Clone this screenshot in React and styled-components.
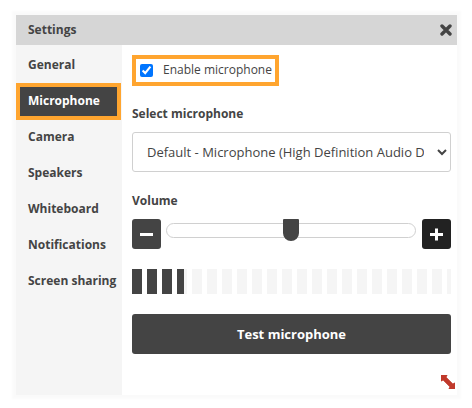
import React, { useState } from "react";
import styled, { createGlobalStyle } from "styled-components";

const tabs = [
  "General",
  "Microphone",
  "Camera",
  "Speakers",
  "Whiteboard",
  "Notifications",
  "Screen sharing",
];

function App() {
  const [tab, setTab] = useState("Microphone");
  const [enabled, setEnabled] = useState(true);
  const [volume, setVolume] = useState(50);
  const level = 16.3;

  return (
    <>
      <GlobalStyle />
      <Dialog role="dialog" aria-labelledby="settings-title">
        <Header>
          <Title id="settings-title">Settings</Title>
          <CloseButton aria-label="Close">
            <svg width="12" height="12" viewBox="0 0 12 12">
              <path
                d="M2 2L10 10M10 2L2 10"
                stroke="#444"
                strokeWidth="3.4"
                strokeLinecap="round"
              />
            </svg>
          </CloseButton>
        </Header>
        <Body>
          <Sidebar>
            {tabs.map((name) => (
              <Tab key={name} $active={name === tab} onClick={() => setTab(name)}>
                {name}
              </Tab>
            ))}
          </Sidebar>
          <Content>
            <CheckLabel>
              <Checkbox
                type="checkbox"
                checked={enabled}
                onChange={(e) => setEnabled(e.target.checked)}
              />
              <CheckText>Enable microphone</CheckText>
            </CheckLabel>

            <FieldLabel htmlFor="microphone">Select microphone</FieldLabel>
            <Select id="microphone">
              <option>Default - Microphone (High Definition Audio Device)</option>
            </Select>

            <FieldLabel htmlFor="volume">Volume</FieldLabel>
            <VolumeRow>
              <StepButton
                aria-label="Decrease volume"
                onClick={() => setVolume(Math.max(0, volume - 10))}
              >
                <svg width="13" height="13" viewBox="0 0 13 13">
                  <path d="M0 6.5H13" stroke="#fff" strokeWidth="3" />
                </svg>
              </StepButton>
              <Slider
                id="volume"
                type="range"
                min="0"
                max="100"
                value={volume}
                onChange={(e) => setVolume(Number(e.target.value))}
              />
              <StepButton
                $dark
                aria-label="Increase volume"
                onClick={() => setVolume(Math.min(100, volume + 10))}
              >
                <svg width="13" height="13" viewBox="0 0 13 13">
                  <path d="M0 6.5H13M6.5 0.5V12.5" stroke="#fff" strokeWidth="3" />
                </svg>
              </StepButton>
            </VolumeRow>

            <Meter role="meter" aria-label="Input level" aria-valuenow={level}>
              <MeterFill style={{ width: `${level}%` }} />
            </Meter>

            <TestButton>Test microphone</TestButton>
          </Content>
        </Body>
        <ResizeHandle width="14" height="14" viewBox="0 0 14 14">
          <path
            d="M0 0H6V1L5 2L12 9L13 8H14V14H8V13L9 12L2 5L1 6H0Z"
            fill="#c0392b"
            stroke="#c0392b"
            strokeWidth="0.6"
          />
        </ResizeHandle>
      </Dialog>
    </>
  );
}

export default App;

const GlobalStyle = createGlobalStyle`
  * {
    box-sizing: border-box;
  }

  body {
    margin: 0;
    background: #fff;
    color: #444;
    font-family: "Open Sans", sans-serif;
    font-size: 12px;
  }

  button, select, input {
    font-family: inherit;
    color: inherit;
    margin: 0;
  }
`;

const Dialog = styled.div`
  position: relative;
  display: flex;
  flex-direction: column;
  margin: 15px 15px 13px 16px;
  min-height: calc(100vh - 28px);
  background: #fff;
  box-shadow: 0 0 2px 4px rgba(0, 0, 0, 0.02);
`;

const Header = styled.div`
  display: flex;
  align-items: center;
  justify-content: space-between;
  height: 30px;
  padding: 0 5px 0 12px;
  background: #d6d6d6;
`;

const Title = styled.h1`
  margin: 0;
  padding-bottom: 2px;
  font-size: 12px;
  font-weight: 700;
`;

const CloseButton = styled.button`
  display: flex;
  padding: 0;
  border: 0;
  background: none;
`;

const Body = styled.div`
  display: flex;
  flex: 1;
`;

const Sidebar = styled.nav`
  display: flex;
  flex-direction: column;
  flex: 0 0 106px;
  padding: 2px 1px 0 0;
  background: #f5f5f5;
`;

const Tab = styled.button`
  height: ${(p) => (p.$active ? "37px" : "36px")};
  margin-bottom: ${(p) => (p.$active ? "-1px" : "0")};
  padding: 0 0 2px ${(p) => (p.$active ? "8px" : "12px")};
  border: ${(p) => (p.$active ? "4px solid #ffa52f" : "0")};
  background: ${(p) => (p.$active ? "#444" : "transparent")};
  color: ${(p) => (p.$active ? "#fff" : "#444")};
  font-size: 12px;
  font-weight: 700;
  text-align: left;
  white-space: nowrap;
`;

const Content = styled.div`
  display: flex;
  flex-direction: column;
  flex: 1;
  min-width: 0;
  padding: 10px 6px 40px 10px;
`;

const CheckLabel = styled.label`
  display: flex;
  align-items: center;
  align-self: flex-start;
  gap: 10px;
  height: 31px;
  padding: 0 3px 0 4px;
  border: 4px solid #ffa52f;
`;

const Checkbox = styled.input`
  width: 13px;
  height: 13px;
  accent-color: #0075ff;
`;

const CheckText = styled.span`
  padding-bottom: 2px;
`;

const FieldLabel = styled.label`
  padding: 20px 0 10px;
  font-weight: 700;
  line-height: 16px;

  select + & {
    padding-top: 21px;
  }
`;

const Select = styled.select`
  width: 100%;
  height: 40px;
  padding: 0 10px;
  border: 1px solid #d0d0d0;
  border-radius: 3px;
  background-color: #fff;
  font-size: 13px;
`;

const VolumeRow = styled.div`
  display: flex;
  align-items: flex-start;
  gap: 5px;
`;

const StepButton = styled.button`
  display: flex;
  align-items: center;
  justify-content: center;
  flex: 0 0 29px;
  height: 30px;
  padding: 0;
  border: 0;
  border-radius: 3px;
  background: ${(p) => (p.$dark ? "#222" : "#444")};
`;

const Slider = styled.input`
  appearance: none;
  flex: 1;
  min-width: 0;
  height: 23px;
  padding-right: 1px;
  background: transparent;

  &::-webkit-slider-runnable-track {
    height: 15px;
    border: 1px solid #d0d0d0;
    border-radius: 8px;
    background: #fff;
  }

  &::-webkit-slider-thumb {
    appearance: none;
    width: 16px;
    height: 22px;
    margin-top: -5px;
    border-radius: 1px 1px 8px 8px;
    background: #444;
  }
`;

const Meter = styled.div`
  height: 25px;
  margin-top: 20px;
  background: repeating-linear-gradient(
    to right,
    #f5f5f5 0 10px,
    transparent 10px 15px
  );
`;

const MeterFill = styled.div`
  height: 100%;
  background: repeating-linear-gradient(to right, #444 0 10px, #fff 10px 15px);
`;

const TestButton = styled.button`
  height: 40px;
  margin-top: 20px;
  border: 0;
  border-radius: 3px;
  background: #444;
  color: #fff;
  font-size: 13px;
  font-weight: 700;
`;

/* sits over the bottom right corner of the dialog */
const ResizeHandle = styled.svg`
  position: absolute;
  right: 2px;
  bottom: 6px;
  cursor: nwse-resize;
`;
